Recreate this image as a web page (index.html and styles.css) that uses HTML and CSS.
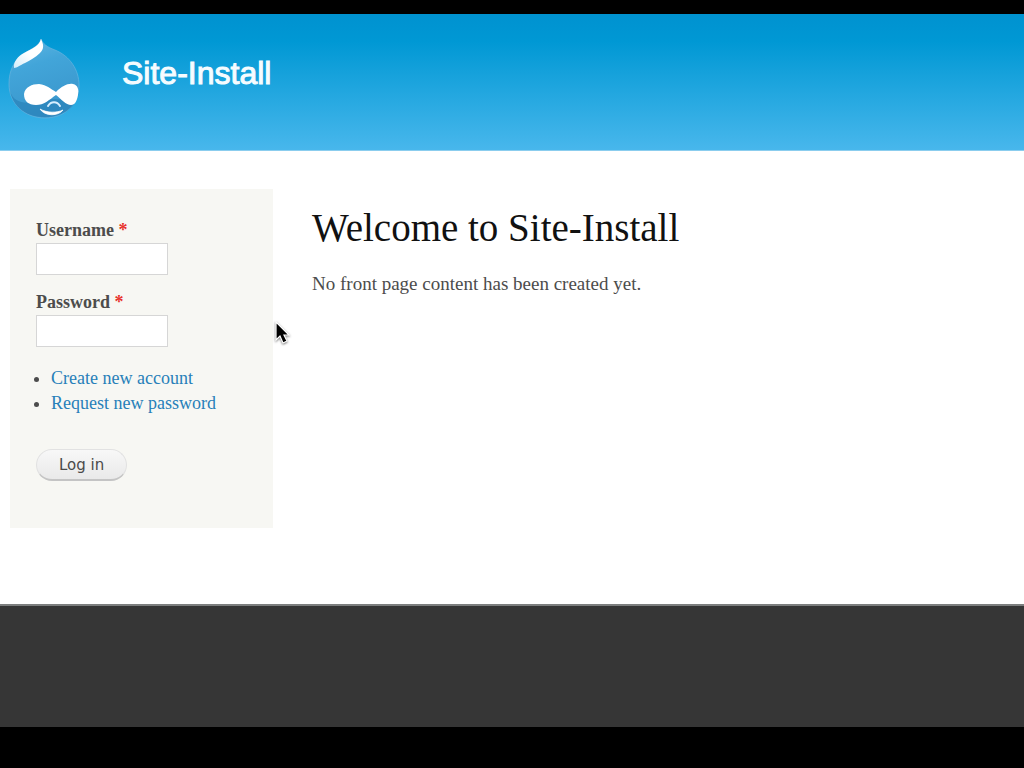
FILE: index.html
```html
<!DOCTYPE html>
<html lang="en">
<head>
<meta charset="utf-8">
<meta name="viewport" content="width=device-width, initial-scale=1">
<title>Welcome to Site-Install | Site-Install</title>
<link rel="stylesheet" href="styles.css">
</head>
<body>
<header class="header">
  <svg class="logo" viewBox="0 0 73 83" aria-hidden="true">
    <defs>
      <linearGradient id="drop" x1="0" y1="0" x2="0.3" y2="1">
        <stop offset="0" stop-color="#62b8e3"/>
        <stop offset="0.4" stop-color="#42a5d9"/>
        <stop offset="1" stop-color="#3a96cc"/>
      </linearGradient>
      <linearGradient id="shine" x1="1" y1="0" x2="0" y2="1">
        <stop offset="0.5" stop-color="#fff"/>
        <stop offset="1" stop-color="#d3edfa"/>
      </linearGradient>
    </defs>
    <path d="M33 1C35 6 39 9 47 12C62 18 71 32 71 47C71 67 56 80 37 80C17 80 1 66 1 46C1 32 6 23 15 16C25 10 31 8 33 1Z" fill="url(#drop)" stroke="#68b4de" stroke-opacity=".7"/>
    <path d="M2 53C5 64 16 67 31 63C43 58 61 66 71 54C68 70 55 79 37 79C18 79 5 69 2 53Z" fill="#277eb6" opacity=".6"/>
    <path d="M33 1C36 7 36 11 32 15C27 20 22 22 17 25C12 27 9 30 6 30C5 24 10 18 16 15C25 10 31 8 33 1Z" fill="url(#shine)"/>
    <path d="M48 54C54 48 60 45 65 46C70 47 71 52 70 57C69 63 67 67 63 67C58 67 53 61 48 57C41 62 36 67 28 67C20 67 16 63 16 56C17 49 24 46 31 46C39 47 43 51 48 54Z" fill="#fff"/>
    <path d="M40 68C43 63 49 63 52 68" fill="none" stroke="#d8efff" stroke-width="2" stroke-linecap="round"/>
    <path d="M32 71C39 75 49 75 55 72C51 78 37 79 32 71Z" fill="#fff" stroke="#fff" stroke-width=".7" stroke-linejoin="round"/>
  </svg>
  <div class="site-name">Site-Install</div>
</header>
<main class="main">
  <aside class="sidebar">
    <form class="login">
      <div class="field">
        <label class="label" for="user">Username <span class="required">*</span></label>
        <input class="textbox" id="user" type="text" required>
      </div>
      <div class="field">
        <label class="label" for="pass">Password <span class="required">*</span></label>
        <input class="textbox" id="pass" type="password" required>
      </div>
      <ul class="links">
        <li><a class="link" href="#register">Create new account</a></li>
        <li><a class="link" href="#password">Request new password</a></li>
      </ul>
      <button class="button" type="submit">Log in</button>
    </form>
  </aside>
  <section class="content">
    <h1 class="title">Welcome to Site-Install</h1>
    <p class="text">No front page content has been created yet.</p>
  </section>
</main>
<footer class="footer"></footer>
<svg class="pointer" viewBox="0 0 16 24" aria-hidden="true">
  <path d="M1 1V19L5 15L8 22L12 20L9 14H14Z" fill="#000" stroke="#fff" stroke-width="1.2"/>
</svg>
</body>
</html>
```

FILE: styles.css
```css
* { box-sizing: border-box; }

body {
  display: flex;
  flex-direction: column;
  min-height: 100vh;
  margin: 0;
  padding: 14px 0 41px;
  background: #000;
  color: #4c4c4c;
  font-family: Georgia, "Liberation Serif", serif;
  font-size: 18px;
  line-height: 25px;
}

.header {
  display: flex;
  align-items: flex-start;
  gap: 41px;
  padding: 24px 8px 29px;
  background: linear-gradient(#0092d0, #0098d4 20%, #48b7ec);
  border-bottom: 1px solid #8bcdee;
}

.logo { width: 73px; height: 83px; }

.site-name {
  padding-top: 16px;
  color: #f6fcff;
  font: 32px/38px "Liberation Sans", sans-serif;
  -webkit-text-stroke: 1px #f6fcff;
}

.main {
  display: flex;
  flex: 1;
  align-items: flex-start;
  gap: 39px;
  padding: 38px 10px;
  background: #fff;
}

.sidebar {
  flex: 0 0 263px;
  padding: 29px 26px 47px;
  background: #f7f7f3;
}

.field { margin-bottom: 16px; }

.label {
  display: block;
  font-weight: bold;
}

.required { color: #e8322c; }

.textbox {
  display: block;
  width: 132px;
  height: 32px;
  padding: 4px;
  border: 1px solid #d6d6d6;
  background: #fff;
  font: inherit;
}

.field + .field { margin-top: -1px; }

.links {
  margin: 19px 0 33px;
  padding-left: 15px;
}

.link {
  color: #2780b9;
  text-decoration: none;
}

.button {
  display: block;
  height: 32px;
  padding: 0 22px;
  border: 1px solid #e2e2e2;
  border-bottom: 2px solid #c4c4c4;
  border-radius: 16px;
  background: linear-gradient(#f8f8f8, #e9e9e9);
  color: #4a4a4a;
  font: 15px/28px "DejaVu Sans", sans-serif;
}

.content {
  flex: 1;
  padding-top: 18px;
}

.title {
  margin: 0 0 22px;
  color: #111;
  font-size: 39px;
  font-weight: normal;
  line-height: 42px;
}

.text {
  margin: 0;
  font-size: 19px;
}

.footer {
  height: 123px;
  border-top: 2px solid #7c7e7e;
  background: #363636;
}

.pointer {
  position: absolute;
  top: 321px;
  left: 275px;
  width: 16px;
  height: 24px;
  filter: drop-shadow(0 1px 1px #777);
}
```
